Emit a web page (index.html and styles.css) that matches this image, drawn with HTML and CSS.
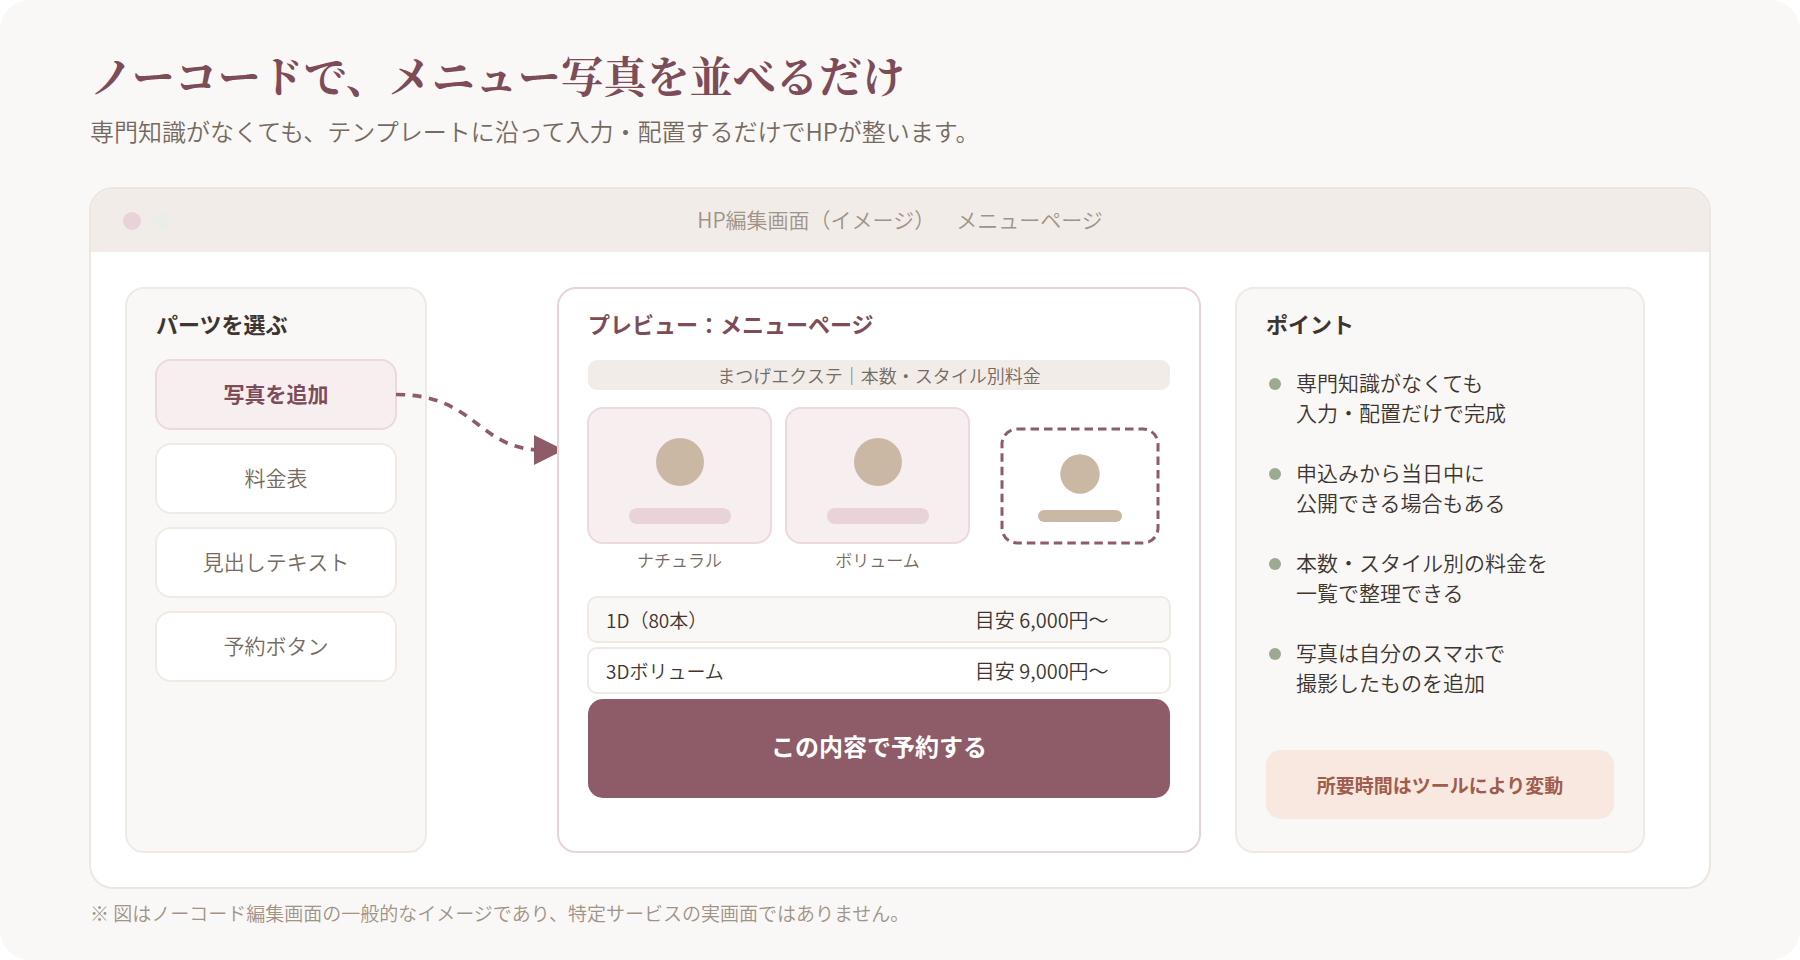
FILE: index.html
```html
<!DOCTYPE html>
<html lang="ja">
<head>
    <meta charset="UTF-8">
    <meta name="viewport" content="width=device-width, initial-scale=1.0">
    <title>ノーコードで、メニュー写真を並べるだけ</title>
    <link rel="stylesheet" href="styles.css">
</head>
<body>
    <div class="page">
        <header class="intro">
            <h1>ノーコードで、メニュー写真を並べるだけ</h1>
            <p>専門知識がなくても、テンプレートに沿って入力・配置するだけでHPが整います。</p>
        </header>

        <main class="editor">
            <div class="titlebar">
                <div class="dots">
                    <span class="dot dot-pink"></span>
                    <span class="dot dot-green"></span>
                </div>
                <span class="titlebar-text">HP編集画面（イメージ）　メニューページ</span>
            </div>

            <div class="workspace">
                <section class="panel parts">
                    <h2>パーツを選ぶ</h2>
                    <ul class="parts-list">
                        <li>
                            <button type="button" class="part active">写真を追加</button>
                            <svg class="arrow" viewBox="0 0 168 72" width="168" height="72" aria-hidden="true">
                                <path d="M-1 -0.5 C80 -0.5 80 55 146 55" fill="none" stroke="#8e5c68" stroke-width="3.7" stroke-dasharray="9 7.5"/>
                                <path d="M137 40 L167 55 L137 70 Z" fill="#8e5c68"/>
                            </svg>
                        </li>
                        <li><button type="button" class="part">料金表</button></li>
                        <li><button type="button" class="part">見出しテキスト</button></li>
                        <li><button type="button" class="part">予約ボタン</button></li>
                    </ul>
                </section>

                <section class="panel preview">
                    <h2>プレビュー：メニューページ</h2>
                    <p class="band">まつげエクステ｜本数・スタイル別料金</p>
                    <div class="photos">
                        <figure>
                            <div class="photo">
                                <span class="face"></span>
                                <span class="bar"></span>
                            </div>
                            <figcaption>ナチュラル</figcaption>
                        </figure>
                        <figure>
                            <div class="photo">
                                <span class="face"></span>
                                <span class="bar"></span>
                            </div>
                            <figcaption>ボリューム</figcaption>
                        </figure>
                        <!-- empty slot for the next photo -->
                        <div class="slot">
                            <svg viewBox="0 0 160 118" width="160" height="118" aria-hidden="true">
                                <rect x="2" y="2" width="156" height="114" rx="15" fill="none" stroke="#8e5c68" stroke-width="3" stroke-dasharray="8.5 5"/>
                                <circle cx="80" cy="47" r="19.7" fill="#cbb8a4"/>
                                <rect x="38" y="83" width="84" height="12" rx="6" fill="#cbb8a4"/>
                            </svg>
                        </div>
                    </div>
                    <dl class="prices">
                        <div class="price shaded">
                            <dt>1D（80本）</dt>
                            <dd>目安 6,000円〜</dd>
                        </div>
                        <div class="price">
                            <dt>3Dボリューム</dt>
                            <dd>目安 9,000円〜</dd>
                        </div>
                    </dl>
                    <button type="button" class="reserve">この内容で予約する</button>
                </section>

                <section class="panel points">
                    <h2>ポイント</h2>
                    <ul class="points-list">
                        <li>専門知識がなくても<br>入力・配置だけで完成</li>
                        <li>申込みから当日中に<br>公開できる場合もある</li>
                        <li>本数・スタイル別の料金を<br>一覧で整理できる</li>
                        <li>写真は自分のスマホで<br>撮影したものを追加</li>
                    </ul>
                    <p class="notice">所要時間はツールにより変動</p>
                </section>
            </div>
        </main>

        <p class="note">※ 図はノーコード編集画面の一般的なイメージであり、特定サービスの実画面ではありません。</p>
    </div>
</body>
</html>
```

FILE: styles.css
```css
* {
    box-sizing: border-box;
}
body {
    margin: 0;
    background: #fff;
    color: #3d3530;
    font-family: "Noto Sans CJK JP", sans-serif;
    font-weight: 350;
    text-spacing-trim: space-all;
}
h1, h2, p, ul, dl, dd, figure {
    margin: 0;
    padding: 0;
}
ul {
    list-style: none;
}
button {
    font-family: inherit;
    cursor: pointer;
}
.page {
    min-height: 100vh;
    padding: 45px 89px 24px;
    background: #faf8f6;
    border-radius: 30px;
}

/* heading */
.intro {
    padding-left: 1px;
}
.intro h1 {
    color: #7d4c59;
    font-family: "Noto Serif CJK JP", "Noto Serif JP", "Noto Sans CJK JP", serif;
    font-size: 43px;
    font-weight: 700;
    line-height: 60px;
}
.intro p {
    color: #756a62;
    font-size: 24px;
    line-height: 36px;
    margin-top: 8px;
}

/* editor window */
.editor {
    margin-top: 38px;
    background: #fff;
    border: 2px solid #ede6e0;
    border-radius: 24px;
}
.titlebar {
    display: grid;
    grid-template-columns: 1fr auto 1fr;
    align-items: center;
    height: 63px;
    padding: 0 32px;
    background: #f2ece8;
    border-radius: 22px 22px 0 0;
}
.dots {
    display: flex;
    gap: 12px;
}
.dot {
    width: 18px;
    height: 18px;
    border-radius: 50%;
}
.dot-pink {
    background: #e8d3d9;
}
.dot-green {
    background: #ebeee8;
}
.titlebar-text {
    padding-bottom: 4px;
    color: #a09388;
    font-size: 21px;
}
.workspace {
    display: grid;
    grid-template-columns: 302px minmax(0, 1fr) 410px;
    padding: 35px 64px 34px 34px;
}

/* panels */
.panel {
    display: flex;
    flex-direction: column;
    min-height: 566px;
    padding: 18px 28px 28px;
    background: #faf8f6;
    border: 2px solid #f0eae5;
    border-radius: 19px;
}
.panel h2 {
    padding-left: 1px;
    font-size: 22px;
    font-weight: 700;
    line-height: 32px;
}

/* parts */
.parts-list {
    display: grid;
    gap: 13px;
    margin-top: 20px;
}
.parts-list li {
    position: relative;
}
.part {
    display: block;
    width: 100%;
    height: 71px;
    padding: 0 0 4px;
    background: #fff;
    border: 2px solid #f0eae5;
    border-radius: 16px;
    color: #756a62;
    font-size: 21px;
    font-weight: 350;
}
.part.active {
    background: #f7eeef;
    border-color: #ecd9de;
    color: #7d4c59;
    font-weight: 700;
}
.arrow {
    position: absolute;
    top: 50%;
    left: 100%;
    overflow: visible;
}

/* preview, sits over the tip of the arrow */
.preview {
    position: relative;
    z-index: 1;
    margin: 0 34px 0 130px;
    background: #fff;
    border-color: #e8d3d9;
}
.preview h2 {
    color: #7d4c59;
}
.band {
    margin: 21px 1px 17px;
    background: #f2ece8;
    border-radius: 9px;
    color: #756a62;
    font-size: 18px;
    line-height: 30px;
    text-align: center;
}
.photos {
    display: grid;
    grid-template-columns: 185fr 185fr 188fr;
    gap: 13px;
}
.photo {
    display: flex;
    flex-direction: column;
    align-items: center;
    justify-content: space-between;
    height: 137px;
    padding: 29px 0 18px;
    background: #f7eeef;
    border: 2px solid #ecd9de;
    border-radius: 16px;
}
.face {
    width: 48px;
    height: 48px;
    background: #cbb8a4;
    border-radius: 50%;
}
.bar {
    width: 102px;
    height: 16px;
    background: #e8d3d9;
    border-radius: 8px;
}
.photos figcaption {
    margin-top: 3px;
    color: #756a62;
    font-size: 17px;
    line-height: 26px;
    text-align: center;
}
.slot {
    display: flex;
    align-items: flex-end;
    justify-content: center;
    height: 138px;
    padding-left: 6px;
}
.prices {
    display: grid;
    gap: 4px;
    margin-top: 23px;
}
.price {
    display: grid;
    grid-template-columns: 19fr 10fr;
    align-items: center;
    height: 47px;
    padding: 0 0 0 17px;
    border: 2px solid #f0eae5;
    border-radius: 10px;
}
.price dt {
    font-size: 19px;
}
.price dd {
    font-size: 20px;
}
.price.shaded {
    background: #faf8f6;
}
.reserve {
    height: 99px;
    margin: 5px 1px 0;
    padding: 0 0 6px;
    background: #8e5c68;
    border: none;
    border-radius: 15px;
    color: #fff;
    font-size: 24px;
    font-weight: 700;
}

/* points */
.points-list {
    display: grid;
    gap: 30px;
    margin-top: 28px;
}
.points-list li {
    position: relative;
    padding-left: 31px;
    font-size: 21px;
    line-height: 30px;
}
.points-list li::before {
    content: "";
    position: absolute;
    top: 11px;
    left: 4px;
    width: 12px;
    height: 12px;
    background: #9caa8f;
    border-radius: 50%;
}
.notice {
    margin: auto 1px 4px;
    background: #f8e8e0;
    border-radius: 15px;
    color: #a05c4c;
    font-size: 19px;
    font-weight: 700;
    line-height: 69px;
    text-align: center;
}

.note {
    padding-left: 1px;
    margin-top: 9px;
    color: #a09388;
    font-size: 19px;
    line-height: 30px;
}
```
